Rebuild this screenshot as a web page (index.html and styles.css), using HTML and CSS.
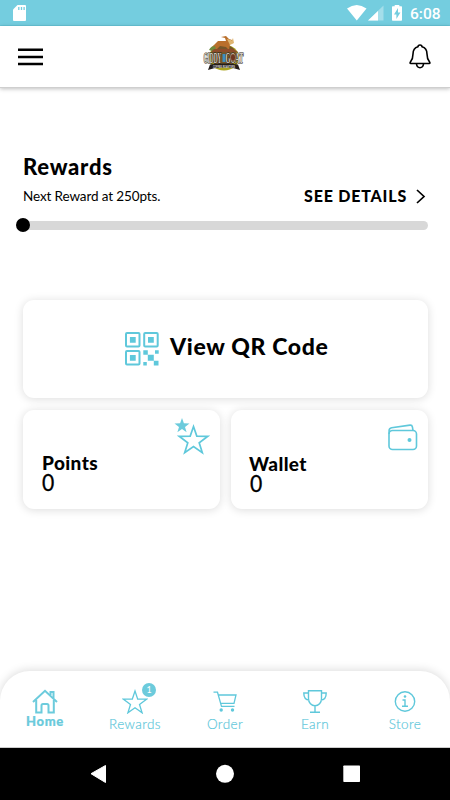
FILE: index.html
```
<!DOCTYPE html>
<html lang="en">
<head>
<meta charset="utf-8">
<meta name="viewport" content="width=device-width, initial-scale=1">
<title>Giddy Goat Rewards</title>
<link rel="stylesheet" href="styles.css">
</head>
<body>
<div class="status">
  <svg class="sd" width="13" height="16" viewBox="0 0 13 16"><path fill="#fff" d="M4.500 0H12q1 0 1 1v14q0 1-1 1H1q-1 0-1-1V4.500z"/><path stroke="#74cddf" stroke-width="1.300" d="M5.800 2v3M8.500 2v3M11.100 2v3"/></svg>
  <div class="status-right">
    <svg width="64" height="26" viewBox="0 0 64 26"><path fill="#fff" d="M0 8.500Q9.800 1.500 19.500 8.500L9.800 20.500z"/><path fill="#fff" fill-opacity=".35" d="M21 20.500L36.500 5.500v15z"/><path fill="#fff" d="M21 20.500L31 11v9.500zM45 7q0-.7.700-.7h2V5h4.600v1.300h2q.7 0 .7.700v13q0 .8-.7.800h-8.600q-.7 0-.7-.8z"/><path fill="#74cddf" d="M51 8l-4 6.500h2.400V19l4-6.500H51z"/></svg>
    <span class="clock">6:08</span>
  </div>
</div>
<header class="header">
  <svg class="menu" width="25" height="18" viewBox="0 0 25 18"><path stroke="#000" stroke-width="2.500" d="M0 1.800h25M0 9h25M0 16h25"/></svg>
  <svg class="logo" width="48" height="38" viewBox="0 0 48 38">
    <ellipse cx="22" cy="22.500" rx="15" ry="13" fill="#aaa41f"/>
    <ellipse cx="22" cy="21" rx="13" ry="11" fill="#74562a"/>
    <path fill="#6f8b3d" d="M7 15q3-6 9-4l-3 6z"/>
    <path fill="#b96f2c" d="M12 10l4-4h8l-1-3-4-1 5-1 3 3 3 1 1 3-3 1-1 6-3-3-6-1-4 4-1-4-3 1z"/>
    <path fill="#dfb672" d="M25 4l4 1 3 3-4 2zM29 7l2-4 1 5z"/>
    <path fill="#8d4c2a" d="M12 14h19l5 3H9z"/>
    <text class="logo-name" x="1.500" y="28" textLength="18" lengthAdjust="spacingAndGlyphs">GIDDY</text>
    <path fill="#3b8fc2" d="M20.500 19h3v8h-3z"/>
    <text class="logo-name" x="23.500" y="28" textLength="18" lengthAdjust="spacingAndGlyphs">GOAT</text>
    <ellipse cx="31" cy="22.500" rx="2.600" ry="3.600" fill="#6f3520" stroke="#a58a68" stroke-width=".7"/>
    <path fill="#231d19" d="M8 29.500q14-2 28 0l2 5.500-6-1.800q-10-1.500-20 0L6 35z"/>
    <text class="logo-sub" x="11" y="32.500" textLength="22" lengthAdjust="spacingAndGlyphs">COFFEE ROASTERS</text>
  </svg>
  <svg class="bell" width="22" height="25" viewBox="0 0 22 25"><g fill="none" stroke="#000" stroke-width="1.600" stroke-linejoin="round"><path d="M9 2.700Q9 1 11 1t2 1.700Q18 4 18 10c0 5 1 6 2.700 8.200.5.800.2 1.300-.5 1.300H1.800c-.7 0-1-.5-.5-1.300C3 16 4 15 4 10Q4 4 9 2.700z"/><path d="M7.500 20q.5 3.700 3.500 3.700t3.500-3.700"/></g></svg>
</header>
<main class="main">
  <h1 class="title">Rewards</h1>
  <div class="next">
    <span class="next-text">Next Reward at 250pts.</span>
    <span class="details">SEE DETAILS</span>
    <svg class="chevron" width="10" height="15" viewBox="0 0 10 15"><path fill="none" stroke="#000" stroke-width="1.700" d="M1 1l7 6.500L1 14"/></svg>
  </div>
  <div class="track"><div class="knob"></div></div>
  <section class="card qr">
    <svg width="34" height="34" viewBox="0 0 34 34"><g fill="none" stroke="#5fc8db" stroke-width="2"><rect x="1" y="1" width="13.500" height="13.500" rx="1"/><rect x="19.200" y="1" width="13.500" height="13.500" rx="1"/><rect x="1" y="19" width="13.500" height="13.500" rx="1"/></g><path fill="#5fc8db" d="M4.900 4.900h5.800v5.800H4.900zM23 4.900h5.800v5.800H23zM4.900 23h5.800v5.800H4.900zM18.300 18.300h4.500v4.500h-4.500zM30 18.300h3.700v3.500H30zM22.800 22.800h6v6h-6zM18.300 30h3.500v3.500h-3.500zM28.800 28.800h4.700v4.700h-4.700z"/></svg>
    <span class="qr-text">View QR Code</span>
  </section>
  <div class="pair">
    <section class="card tile">
      <svg class="tile-icon" width="38" height="38" viewBox="0 0 38 38"><path fill="#6ccbdc" d="M9 1l1.900 5.300 5.600.1L12 9.900l1.600 5.400L9 12.100l-4.600 3.200L6 9.900 1.500 6.400l5.600-.1z"/><path fill="none" stroke="#5fc8db" stroke-width="1.700" d="M20.500 9.500l3.300 9.600 11 .2-8.600 6.400 3.100 9.900-8.800-6-8.800 6 3.100-9.900-8.600-6.400 11-.2z"/></svg>
      <h2 class="tile-title">Points</h2><div class="value">0</div>
    </section>
    <section class="card tile wallet">
      <svg class="tile-icon" width="30" height="27" viewBox="0 0 30 27"><g fill="none" stroke="#5fc8db" stroke-width="1.600"><rect x="1" y="6.500" width="27.500" height="19" rx="3.500"/><path d="M1.100 10V6.500q0-2.300 2.500-2.800L22 1.100q2-.2 2.400 1.700l.6 3.500"/></g><circle cx="21.500" cy="16" r="2" fill="#5fc8db"/></svg>
      <h2 class="tile-title">Wallet</h2><div class="value">0</div>
    </section>
  </div>
</main>
<nav class="nav">
  <a class="item active"><svg width="26" height="25" viewBox="0 0 26 25"><g fill="none" stroke="#6ccbdc" stroke-width="2"><path d="M1 13L13 1.800 25 13"/><path d="M4.200 11v12.500h5.300v-7q0-1.500 1.500-1.500h4q1.500 0 1.500 1.500v7h5.300V11M18.500 6V3h3v6"/></g></svg><span>Home</span></a>
  <a class="item rewards"><svg width="26" height="25" viewBox="0 0 26 25"><path fill="none" stroke="#5fc8db" stroke-width="1.300" d="M13 2l2.700 8.100 8.800.1-7 5.300 2.600 8.300-7.100-5-7.100 5 2.600-8.300-7-5.300 8.800-.1z"/></svg><b class="badge">1</b><span>Rewards</span></a>
  <a class="item"><svg width="26" height="25" viewBox="0 0 26 25"><g fill="none" stroke="#5fc8db" stroke-width="1.300"><path d="M1.500 3.200h4l4 14.200h13M6.500 6H24l-2 8.300H8.700"/></g><circle cx="9.200" cy="21" r="1.700" fill="#5fc8db"/><circle cx="20.500" cy="21" r="1.700" fill="#5fc8db"/></svg><span>Order</span></a>
  <a class="item"><svg width="26" height="25" viewBox="0 0 26 25"><g fill="none" stroke="#5fc8db" stroke-width="1.400"><path d="M6.500 1.700h13v8c0 4-3 7-6.500 7s-6.500-3-6.500-7zM6.500 4H1.800c0 4.500 1.700 7 5.500 7M19.500 4h4.700c0 4.500-1.700 7-5.500 7M13 17v6M8 23.200h10"/></g></svg><span>Earn</span></a>
  <a class="item"><svg width="26" height="25" viewBox="0 0 26 25"><g fill="none" stroke="#5fc8db" stroke-width="1.400"><circle cx="13" cy="12.500" r="9.700"/><path d="M10.500 11H13v6.200M10 17.200h6"/></g><circle cx="13" cy="7.500" r="1.300" fill="#5fc8db"/></svg><span>Store</span></a>
</nav>
<footer class="system">
  <svg width="450" height="52" viewBox="0 0 450 52"><path fill="#fff" stroke="#fff" stroke-linejoin="round" d="M91 25.700L105.500 17.500v17z"/><circle cx="225" cy="25.800" r="9" fill="#fff"/><rect x="343.300" y="17.500" width="16.700" height="16.500" rx=".7" fill="#fff"/></svg>
</footer>
</body>
</html>
```
FILE: styles.css
```
* { box-sizing: border-box; }
body { margin: 0; width: 450px; height: 800px; overflow: hidden; display: flex; flex-direction: column; background: #fff; color: #000; font-family: Lato, "Liberation Sans", sans-serif; }
svg { display: block; flex: none; }
.status { height: 26px; background: #74cddf; display: flex; justify-content: space-between; padding: 0 0 0 13px; border-bottom: 1px solid #67c5d8; }
.status-right { display: flex; width: 103px; }
.sd { margin-top: 5px; }
.clock { font: 500 15.5px/28px Roboto, sans-serif; color: #fff; margin-left: -1px; }
.header { height: 62px; display: flex; align-items: flex-start; justify-content: space-between; padding: 0 19px 0 18px; border-bottom: 1px solid #cfcfcf; box-shadow: 0 1px 4px rgba(0,0,0,.25); }
.menu { margin-top: 22px; }
.logo { margin: 9px 0 0 -1px; }
.bell { margin-top: 18px; }
.logo-name { font: bold 14px "Liberation Serif", serif; fill: #d6cfc2; stroke: #1e1712; stroke-width: 1.2px; paint-order: stroke; }
.logo-sub { font: bold 2.8px "Liberation Sans", sans-serif; fill: #ddd; }
.main { flex: 1; padding: 64px 22px 0 23px; }
.title { margin: 2px 0 0; font-size: 22px; line-height: 26px; font-weight: 900; letter-spacing: .75px; }
.next { display: flex; align-items: center; height: 22px; margin-top: 5px; }
.next-text { font-size: 13.5px; flex: 1; letter-spacing: -.12px; }
.details { font-size: 16px; font-weight: 900; letter-spacing: .8px; margin-top: -2px; }
.chevron { margin-left: 9px; margin-right: 2px; }
.track { height: 9px; margin-top: 14px; border-radius: 5px; background: #d8d8d8; position: relative; }
.knob { position: absolute; left: -7px; top: -3px; width: 14px; height: 14px; border-radius: 50%; background: #000; }
.card { background: #fff; border-radius: 11px; box-shadow: 0 1px 10px rgba(0,0,0,.14); }
.qr { margin-top: 70px; height: 98px; display: flex; align-items: center; padding: 0 0 0 102px; gap: 11px; }
.qr-text { font-size: 23px; font-weight: 900; letter-spacing: .65px; margin-top: -7px; }
.pair { display: grid; grid-template-columns: 197px 197px; gap: 11px; margin-top: 12px; }
.tile { position: relative; height: 99px; padding: 42px 19px 0; }
.tile-icon { position: absolute; right: 9px; top: 7px; }
.wallet .tile-icon { right: 10px; top: 14px; }
.tile-title { margin: 0; font-size: 19px; line-height: 22px; font-weight: 900; letter-spacing: .4px; }
.value { font-size: 23px; line-height: 19px; margin-top: -1px; transform: scaleX(.92); transform-origin: left; -webkit-text-stroke: .3px #000; }
.wallet { padding-top: 43px; }
.wallet .tile-title { letter-spacing: .4px; margin-left: -1px; }
.nav { height: 77px; border-radius: 30px 30px 0 0; box-shadow: 0 -1px 10px rgba(0,0,0,.14); border-bottom: 1px solid #ccc; background: #fff; display: grid; grid-template-columns: repeat(5, 90px); }
.item { position: relative; display: flex; flex-direction: column; align-items: center; padding-top: 18px; color: #5fc8db; font-size: 13.5px; font-weight: 300; line-height: 18px; letter-spacing: .4px; -webkit-text-stroke: .2px #5fc8db; }
.item span { margin-top: 1px; }
.item.active { font-weight: 900; font-size: 13px; letter-spacing: .7px; color: #6ccbdc; }
.item.active span { margin-top: -2px; }
.badge { position: absolute; left: 52px; top: 12px; width: 14px; height: 14px; border-radius: 50%; background: #6ccbdc; color: #fff; font-size: 9px; font-weight: 400; line-height: 14px; text-align: center; letter-spacing: 0; -webkit-text-stroke: 0; }
.system { height: 52px; background: #000; }
```
